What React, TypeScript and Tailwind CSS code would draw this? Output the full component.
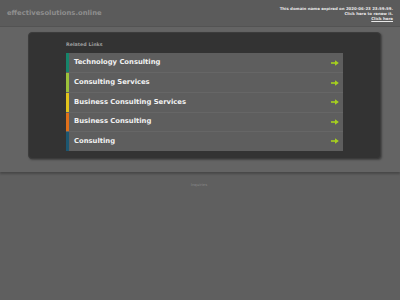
import React from 'react';

interface LinkItem {
    label: string;
    bar: string;
}

const links: LinkItem[] = [
    { label: 'Technology Consulting', bar: 'bg-[#16846a]' },
    { label: 'Consulting Services', bar: 'bg-[#9cc23a]' },
    { label: 'Business Consulting Services', bar: 'bg-[#e2c41c]' },
    { label: 'Business Consulting', bar: 'bg-[#e0701a]' },
    { label: 'Consulting', bar: 'bg-[#1c5670]' },
];

const Arrow: React.FC = () => (
    <svg width="8" height="6" viewBox="0 0 8 6" className="shrink-0">
        <rect x="0" y="2.2" width="5" height="1.6" fill="#a6d01e" />
        <polygon points="4,0.3 7.8,3 4,5.7" fill="#a6d01e" />
    </svg>
);

const App: React.FC = () => {
    return (
        <div
            className="w-[400px] h-[300px] bg-[#5f5f5f] overflow-hidden flex flex-col"
            style={{ fontFamily: '"DejaVu Sans", Verdana, sans-serif' }}
        >
            {/* top bar */}
            <div className="h-[27px] shrink-0 flex justify-between bg-[#5b5b5b] border-b border-[#535353]">
                <div className="pl-[7px] pt-[10px] text-[6.8px] font-bold text-[#8e8e8e] leading-none">
                    effectivesolutions.online
                </div>
                <div className="pr-[7px] pt-[6px] flex flex-col items-end text-[3.9px] font-bold text-[#e8e8e8] leading-[5px]">
                    <span>This domain name expired on 2020-06-23 23:59:59.</span>
                    <span>Click here to renew it.</span>
                    <span className="underline">Click here</span>
                </div>
            </div>

            {/* content band */}
            <div className="shrink-0 bg-[#646464] pt-[5px] pb-[13px] pl-[28px] shadow-[0_2px_2px_rgba(0,0,0,0.25)]">
                <div className="w-[353px] rounded-[4px] bg-[#333333] border border-[#3c3c3c] shadow-[1px_1px_2px_rgba(0,0,0,0.35)] pt-[10px] pb-[7px] pl-[37px]">
                    <div className="text-[4.8px] font-bold text-[#9c9c9c] leading-none mb-[5px]">Related Links</div>
                    <div className="w-[277px] bg-[#5e5e5e] flex flex-col">
                        {links.map((l, i) => (
                            <div
                                key={l.label}
                                className={`h-[19.6px] flex items-center ${i > 0 ? 'border-t border-[#666666]' : ''}`}
                            >
                                <div className={`w-[3px] h-full ${l.bar}`} />
                                <span className="flex-1 pl-[5px] text-[6.8px] font-bold text-[#f2f2f2] leading-none">
                                    {l.label}
                                </span>
                                <div className="pr-[4px]">
                                    <Arrow />
                                </div>
                            </div>
                        ))}
                    </div>
                </div>
            </div>

            {/* footer */}
            <div className="flex justify-center pt-[11px] pr-[2px]">
                <span className="text-[3.8px] text-[#8a8a8a] leading-none">Inquiries</span>
            </div>
        </div>
    );
};

export default App;
